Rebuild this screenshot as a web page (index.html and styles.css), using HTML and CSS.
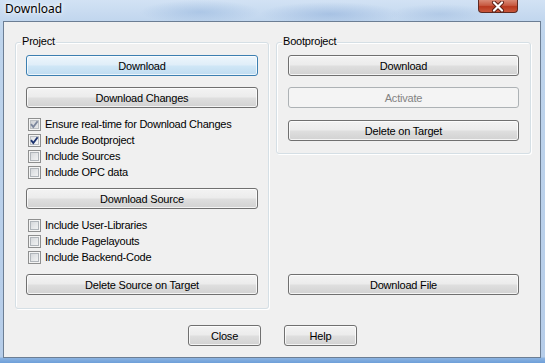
FILE: index.html
```html
<!DOCTYPE html>
<html>
<head>
<meta charset="utf-8">
<link rel="stylesheet" href="styles.css">
</head>
<body>
<div class="window">
  <div class="titlebar">
    <span class="title">Download</span>
    <span class="close-btn">
      <svg width="14" height="11" viewBox="0 0 14 11">
        <path d="M3 1.5 L11 9.5 M11 1.5 L3 9.5" stroke="#5a1d14" stroke-width="4" stroke-linecap="round"/>
        <path d="M3 1.5 L11 9.5 M11 1.5 L3 9.5" stroke="#ffffff" stroke-width="2.2" stroke-linecap="round"/>
      </svg>
    </span>
  </div>
  <div class="client">
    <div class="groups">
      <div class="group project">
        <span class="legend">Project</span>
        <button class="btn default">Download</button>
        <button class="btn gap11">Download Changes</button>
        <div class="checks first">
          <label class="chk"><span class="cb checked grey"><svg width="11" height="11" viewBox="0 0 11 11"><path d="M2 5.2 L4.3 8 L8.6 2.2" fill="none" stroke="#7d889e" stroke-width="1.9"/></svg></span>Ensure real-time for Download Changes</label>
          <label class="chk"><span class="cb checked"><svg width="11" height="11" viewBox="0 0 11 11"><path d="M2 5.2 L4.3 8 L8.6 2.2" fill="none" stroke="#1e3470" stroke-width="1.9"/></svg></span>Include Bootproject</label>
          <label class="chk"><span class="cb"></span>Include Sources</label>
          <label class="chk"><span class="cb"></span>Include OPC data</label>
        </div>
        <button class="btn gap8">Download Source</button>
        <div class="checks second">
          <label class="chk"><span class="cb"></span>Include User-Libraries</label>
          <label class="chk"><span class="cb"></span>Include Pagelayouts</label>
          <label class="chk"><span class="cb"></span>Include Backend-Code</label>
        </div>
        <button class="btn gap9">Delete Source on Target</button>
      </div>
      <div class="right-col">
        <div class="group boot">
          <span class="legend">Bootproject</span>
          <button class="btn">Download</button>
          <button class="btn gap11 disabled">Activate</button>
          <button class="btn gap12">Delete on Target</button>
        </div>
        <button class="btn file">Download File</button>
      </div>
    </div>
    <div class="footer">
      <button class="btn small">Close</button>
      <button class="btn small">Help</button>
    </div>
  </div>
</div>
</body>
</html>
```
FILE: styles.css
```css
html, body {
  margin: 0;
  padding: 0;
}

.window {
  width: 545px;
  height: 363px;
  display: flex;
  flex-direction: column;
  background: linear-gradient(180deg, #c6daf0 0px, #bed4ec 40px, #b6cde9 357px, #8cb3e0 358px, #6e9fd9 363px);
  font-family: "Liberation Sans", Arial, sans-serif;
  font-size: 11px;
  color: #000;
  overflow: hidden;
}

.titlebar {
  height: 21px;
  flex: none;
  display: flex;
  align-items: flex-start;
  padding-left: 5px;
  background:
    radial-gradient(ellipse 60px 12px at 200px 12px, rgba(120,160,210,0.35), transparent),
    radial-gradient(ellipse 70px 12px at 330px 14px, rgba(110,150,205,0.35), transparent),
    radial-gradient(ellipse 50px 10px at 440px 14px, rgba(130,165,210,0.3), transparent),
    linear-gradient(180deg, #d2e2f4, #c1d6ee);
}

.title {
  font-family: "Noto Sans", "Open Sans", sans-serif;
  font-size: 12px;
  line-height: 16px;
  margin-top: 1px;
  color: #000;
  text-shadow: 0 0 6px rgba(255,255,255,0.95), 0 0 3px rgba(255,255,255,0.9);
}

.close-btn {
  margin-left: auto;
  margin-right: 27px;
  width: 40px;
  height: 13px;
  box-sizing: border-box;
  border: 1px solid #5e2a22;
  border-top: none;
  border-radius: 0 0 4px 4px;
  background: linear-gradient(180deg, #d98a76 0%, #c75a42 45%, #b8391f 55%, #c9573b 100%);
  display: flex;
  align-items: center;
  justify-content: center;
}

.client {
  margin: 0 4px 0 3px;
  height: 337px;
  box-sizing: border-box;
  border: 1px solid #6c7e94;
  background: #f0f0f0;
  display: flex;
  flex-direction: column;
}

.groups {
  display: flex;
  gap: 7px;
  margin-top: 20px;
  padding-left: 11px;
}

.group {
  position: relative;
  box-sizing: border-box;
  border: 1px solid #d5dfe5;
  border-radius: 3px;
  box-shadow: inset 1px 1px 0 #ffffff, 1px 1px 0 #ffffff;
  display: flex;
  flex-direction: column;
}

.project {
  width: 254px;
  padding: 12px 10px 13px;
}

.boot {
  width: 255px;
  padding: 12px 11px 12px;
}

.legend {
  position: absolute;
  top: -8px;
  left: 5px;
  padding: 0 1px;
  line-height: 13px;
  background: #f0f0f0;
  letter-spacing: -0.2px;
}

.right-col {
  display: flex;
  flex-direction: column;
}

.btn {
  display: flex;
  align-items: center;
  justify-content: center;
  width: 100%;
  height: 21px;
  flex: none;
  box-sizing: border-box;
  margin: 0;
  padding: 0;
  border: 1px solid #707070;
  border-radius: 3px;
  background: linear-gradient(180deg, #f3f3f3 0%, #ececec 45%, #dedede 55%, #d2d2d2 100%);
  box-shadow: inset 0 0 0 1px rgba(255,255,255,0.75);
  font-family: "Liberation Sans", Arial, sans-serif;
  font-size: 11px;
  letter-spacing: -0.2px;
  color: #000;
}

.btn.default {
  border-color: #3c7fb1;
  background: linear-gradient(180deg, #eef6fc 0%, #e0eef9 45%, #cfe6f6 55%, #bfdcf1 100%);
  box-shadow: inset 0 0 0 1px rgba(255,255,255,0.7);
}

.btn.disabled {
  border-color: #adb2b5;
  background: #f4f4f4;
  box-shadow: none;
  color: #838383;
}

.gap8 { margin-top: 8px; }
.gap9 { margin-top: 9px; }
.gap11 { margin-top: 11px; }
.gap12 { margin-top: 12px; }

.btn.file {
  width: 231px;
  margin: auto 0 14px 12px;
}

.checks {
  display: flex;
  flex-direction: column;
}

.checks.first { margin-top: 8px; }
.checks.second { margin-top: 8px; }

.chk {
  height: 16px;
  display: flex;
  align-items: center;
  gap: 4px;
  padding-left: 2px;
  letter-spacing: -0.25px;
  white-space: nowrap;
}

.cb {
  width: 13px;
  height: 13px;
  flex: none;
  box-sizing: border-box;
  border: 1px solid #8e8f8f;
  background: linear-gradient(135deg, #cdd0d4 0%, #e4e6e8 50%, #f8f8f8 100%);
  box-shadow: inset 0 0 0 1px #f4f4f4, inset 0 0 0 2px #b0b5ba;
  display: flex;
  align-items: center;
  justify-content: center;
}

.cb.checked {
  background: linear-gradient(135deg, #d8dadd 0%, #eeeff0 50%, #fafafa 100%);
  box-shadow: inset 0 0 0 1px #f4f4f4, inset 0 0 0 2px #bcc0c4;
}

.cb.grey {
  background: linear-gradient(135deg, #c8cbd0 0%, #dcdee1 50%, #eeeeee 100%);
}

.cb svg {
  display: block;
}

.footer {
  display: flex;
  justify-content: center;
  gap: 23px;
  margin-top: 16px;
  padding-left: 1px;
}

.btn.small {
  width: 73px;
}
```
